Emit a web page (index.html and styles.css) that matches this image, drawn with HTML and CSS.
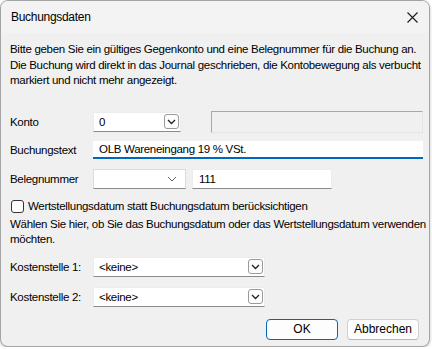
FILE: index.html
```html
<!DOCTYPE html>
<html lang="de">
<head>
    <meta charset="UTF-8">
    <title>Buchungsdaten</title>
    <link rel="stylesheet" href="styles.css">
</head>
<body>
    <div class="window">
        <div class="titlebar">
            <span class="title">Buchungsdaten</span>
            <svg class="close" width="11" height="11" viewBox="0 0 11 11">
                <path d="M0.5 0.5 L10.5 10.5 M10.5 0.5 L0.5 10.5" stroke="#1a1a1a" stroke-width="1.1" fill="none"/>
            </svg>
        </div>

        <div class="content">
            <p class="intro">Bitte geben Sie ein gültiges Gegenkonto und eine Belegnummer für die Buchung an.<br>Die Buchung wird direkt in das Journal geschrieben, die Kontobewegung als verbucht<br>markiert und nicht mehr angezeigt.</p>

            <div class="row row-konto">
                <label>Konto</label>
                <div class="combo combo-konto">
                    <span>0</span>
                    <span class="drop-btn"><svg width="9" height="6" viewBox="0 0 9 6"><path d="M1 1 L4.5 4.5 L8 1" stroke="#222" stroke-width="1.3" fill="none"/></svg></span>
                </div>
                <div class="disabled-box"></div>
            </div>

            <div class="row row-text">
                <label>Buchungstext</label>
                <div class="textbox focused">OLB Wareneingang 19 % VSt.</div>
            </div>

            <div class="row row-beleg">
                <label>Belegnummer</label>
                <div class="combo combo-flat">
                    <span></span>
                    <svg width="10" height="6" viewBox="0 0 10 6"><path d="M1 1 L5 5 L9 1" stroke="#666" stroke-width="1" fill="none"/></svg>
                </div>
                <div class="textbox beleg-nr">111</div>
            </div>

            <div class="check-row">
                <span class="checkbox"></span>
                <span>Wertstellungsdatum statt Buchungsdatum berücksichtigen</span>
            </div>
            <p class="hint">Wählen Sie hier, ob Sie das Buchungsdatum oder das Wertstellungsdatum verwenden<br>möchten.</p>

            <div class="row row-kst">
                <label>Kostenstelle 1:</label>
                <div class="combo combo-kst">
                    <span>&lt;keine&gt;</span>
                    <span class="drop-btn"><svg width="9" height="6" viewBox="0 0 9 6"><path d="M1 1 L4.5 4.5 L8 1" stroke="#222" stroke-width="1.3" fill="none"/></svg></span>
                </div>
            </div>

            <div class="row row-kst">
                <label>Kostenstelle 2:</label>
                <div class="combo combo-kst">
                    <span>&lt;keine&gt;</span>
                    <span class="drop-btn"><svg width="9" height="6" viewBox="0 0 9 6"><path d="M1 1 L4.5 4.5 L8 1" stroke="#222" stroke-width="1.3" fill="none"/></svg></span>
                </div>
            </div>

            <div class="buttons">
                <button class="default">OK</button>
                <button>Abbrechen</button>
            </div>
        </div>
    </div>
</body>
</html>
```

FILE: styles.css
```css
body {
    margin: 0;
    background: #ffffff;
    font-family: "Liberation Sans", Arial, sans-serif;
    font-size: 11.5px;
    letter-spacing: -0.3px;
    color: #000;
}
.window {
    width: 428px;
    height: 345px;
    background: #f0f0f0;
    border: 1px solid #a4a4a4;
    border-radius: 8px;
    box-shadow: 0 1px 3px rgba(0,0,0,0.25);
    overflow: hidden;
}
.titlebar {
    height: 32px;
    display: flex;
    align-items: center;
    justify-content: space-between;
    padding: 0 11px 0 10px;
    background: #f3f3f3;
}
.title {
    font-size: 12px;
}
.content {
    padding: 0 6px 0 9px;
}
.intro {
    margin: 9px 0 0 0;
    line-height: 15.5px;
    white-space: nowrap;
}
.row {
    display: flex;
    align-items: center;
}
.row label {
    width: 83px;
    flex: none;
}
.row-konto {
    margin-top: 22px;
    height: 22px;
}
.combo {
    height: 18px;
    background: #fff;
    border: 1px solid #ececec;
    border-bottom-color: #8a8a8a;
    display: flex;
    align-items: center;
    justify-content: space-between;
    padding-left: 5px;
    box-sizing: content-box;
}
.drop-btn {
    width: 13px;
    height: 13px;
    border: 1px solid #9a9a9a;
    border-radius: 3px;
    background: #fdfdfd;
    display: flex;
    align-items: center;
    justify-content: center;
    margin-right: 1px;
}
.combo-konto {
    width: 82px;
    align-self: flex-start;
    margin-top: 1px;
}
.disabled-box {
    margin-left: 30px;
    width: 213px;
    height: 20px;
    border: 1px solid #a8a8a8;
    border-right-color: #e4e4e4;
    border-bottom-color: #e4e4e4;
}
.textbox {
    height: 17px;
    line-height: 17px;
    background: #fff;
    border: 1px solid #ececec;
    border-bottom-color: #8a8a8a;
    padding-left: 6px;
}
.row-text {
    margin-top: 8px;
}
.textbox.focused {
    width: 326px;
    height: 16px;
    line-height: 16px;
    border: none;
    border-bottom: 2px solid #0067c0;
    padding-left: 6px;
}
.row-beleg {
    margin-top: 10px;
}
.combo-flat {
    width: 78px;
    padding-right: 8px;
    border-color: #dcdcdc;
    border-bottom-color: #8a8a8a;
}
.beleg-nr {
    width: 132px;
    height: 18px;
    line-height: 18px;
    margin-left: 6px;
}
.check-row {
    display: flex;
    align-items: center;
    margin-top: 10px;
    height: 15px;
}
.checkbox {
    width: 11px;
    height: 11px;
    border: 1px solid #333;
    border-radius: 3px;
    background: #fff;
    margin: 0 4px 0 1px;
}
.hint {
    margin: 3px 0 0 0;
    line-height: 15.5px;
    white-space: nowrap;
}
.row-kst {
    margin-top: 9px;
}
.row-kst + .row-kst {
    margin-top: 10px;
}
.combo-kst {
    width: 165px;
}
.buttons {
    display: flex;
    justify-content: flex-end;
    gap: 9px;
    margin-top: 12px;
    padding-right: 4px;
}
button {
    font-family: inherit;
    font-size: 12px;
    width: 72px;
    height: 21px;
    background: #fdfdfd;
    border: 1px solid #d0d0d0;
    border-bottom-color: #b8b8b8;
    border-radius: 4px;
    color: #000;
    padding: 0;
}
button.default {
    border: 1px solid #0067c0;
}
```
